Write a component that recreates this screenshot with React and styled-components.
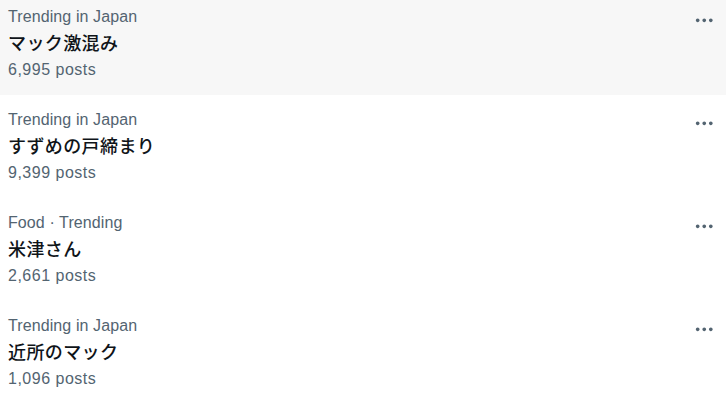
import styled, { createGlobalStyle } from "styled-components";

const GlobalStyle = createGlobalStyle`
  html, body {
    margin: 0;
    padding: 0;
    background: #ffffff;
  }
  body {
    font-family: "Liberation Sans", "Noto Sans CJK JP", sans-serif;
    overflow: hidden;
  }
`;

const trends = [
  { category: "Trending in Japan", title: "マック激混み", posts: "6,995 posts", hovered: true },
  { category: "Trending in Japan", title: "すずめの戸締まり", posts: "9,399 posts" },
  { category: "Food · Trending", title: "米津さん", posts: "2,661 posts" },
  { category: "Trending in Japan", title: "近所のマック", posts: "1,096 posts" },
];

const MoreIcon = () => (
  <svg viewBox="0 0 24 24" width="22.5" height="22.5" aria-hidden="true">
    <path
      fill="currentColor"
      d="M3 12c0-1.1.9-2 2-2s2 .9 2 2-.9 2-2 2-2-.9-2-2zm9 2c1.1 0 2-.9 2-2s-.9-2-2-2-2 .9-2 2 .9 2 2 2zm7 0c1.1 0 2-.9 2-2s-.9-2-2-2-2 .9-2 2 .9 2 2 2z"
    />
  </svg>
);

const App = () => {
  return (
    <>
      <GlobalStyle />
      <TrendList>
        {trends.map((t) => (
          <TrendRow key={t.title} hovered={t.hovered ? 1 : 0}>
            <TrendText>
              <Category>{t.category}</Category>
              <Title>{t.title}</Title>
              <Posts>{t.posts}</Posts>
            </TrendText>
            <MoreButton aria-label="More">
              <MoreIcon />
            </MoreButton>
          </TrendRow>
        ))}
      </TrendList>
    </>
  );
};

const TrendList = styled.div`
  width: 726px;
  display: flex;
  flex-direction: column;
  margin-top: -8px;
`;

const TrendRow = styled.div`
  display: flex;
  justify-content: space-between;
  align-items: flex-start;
  padding: 13px 10px 13px 8px;
  background: ${(props) => (props.hovered ? "#f7f7f7" : "#ffffff")};
  cursor: pointer;
`;

const TrendText = styled.div`
  display: flex;
  flex-direction: column;
`;

const Category = styled.div`
  font-size: 16px;
  line-height: 24px;
  letter-spacing: 0.1px;
  color: #536471;
`;

const Title = styled.div`
  font-family: "Noto Sans CJK JP", "Liberation Sans", sans-serif;
  font-size: 18px;
  line-height: 27px;
  font-weight: 500;
  letter-spacing: 0.4px;
  color: #0f1419;
  margin-bottom: 2px;
`;

const Posts = styled.div`
  font-size: 16px;
  line-height: 24px;
  letter-spacing: 0.5px;
  color: #536471;
`;

const MoreButton = styled.div`
  margin-top: 4px;
  margin-right: 1px;
  width: 22.5px;
  height: 22.5px;
  color: #536471;
  display: flex;
`;

export default App;
